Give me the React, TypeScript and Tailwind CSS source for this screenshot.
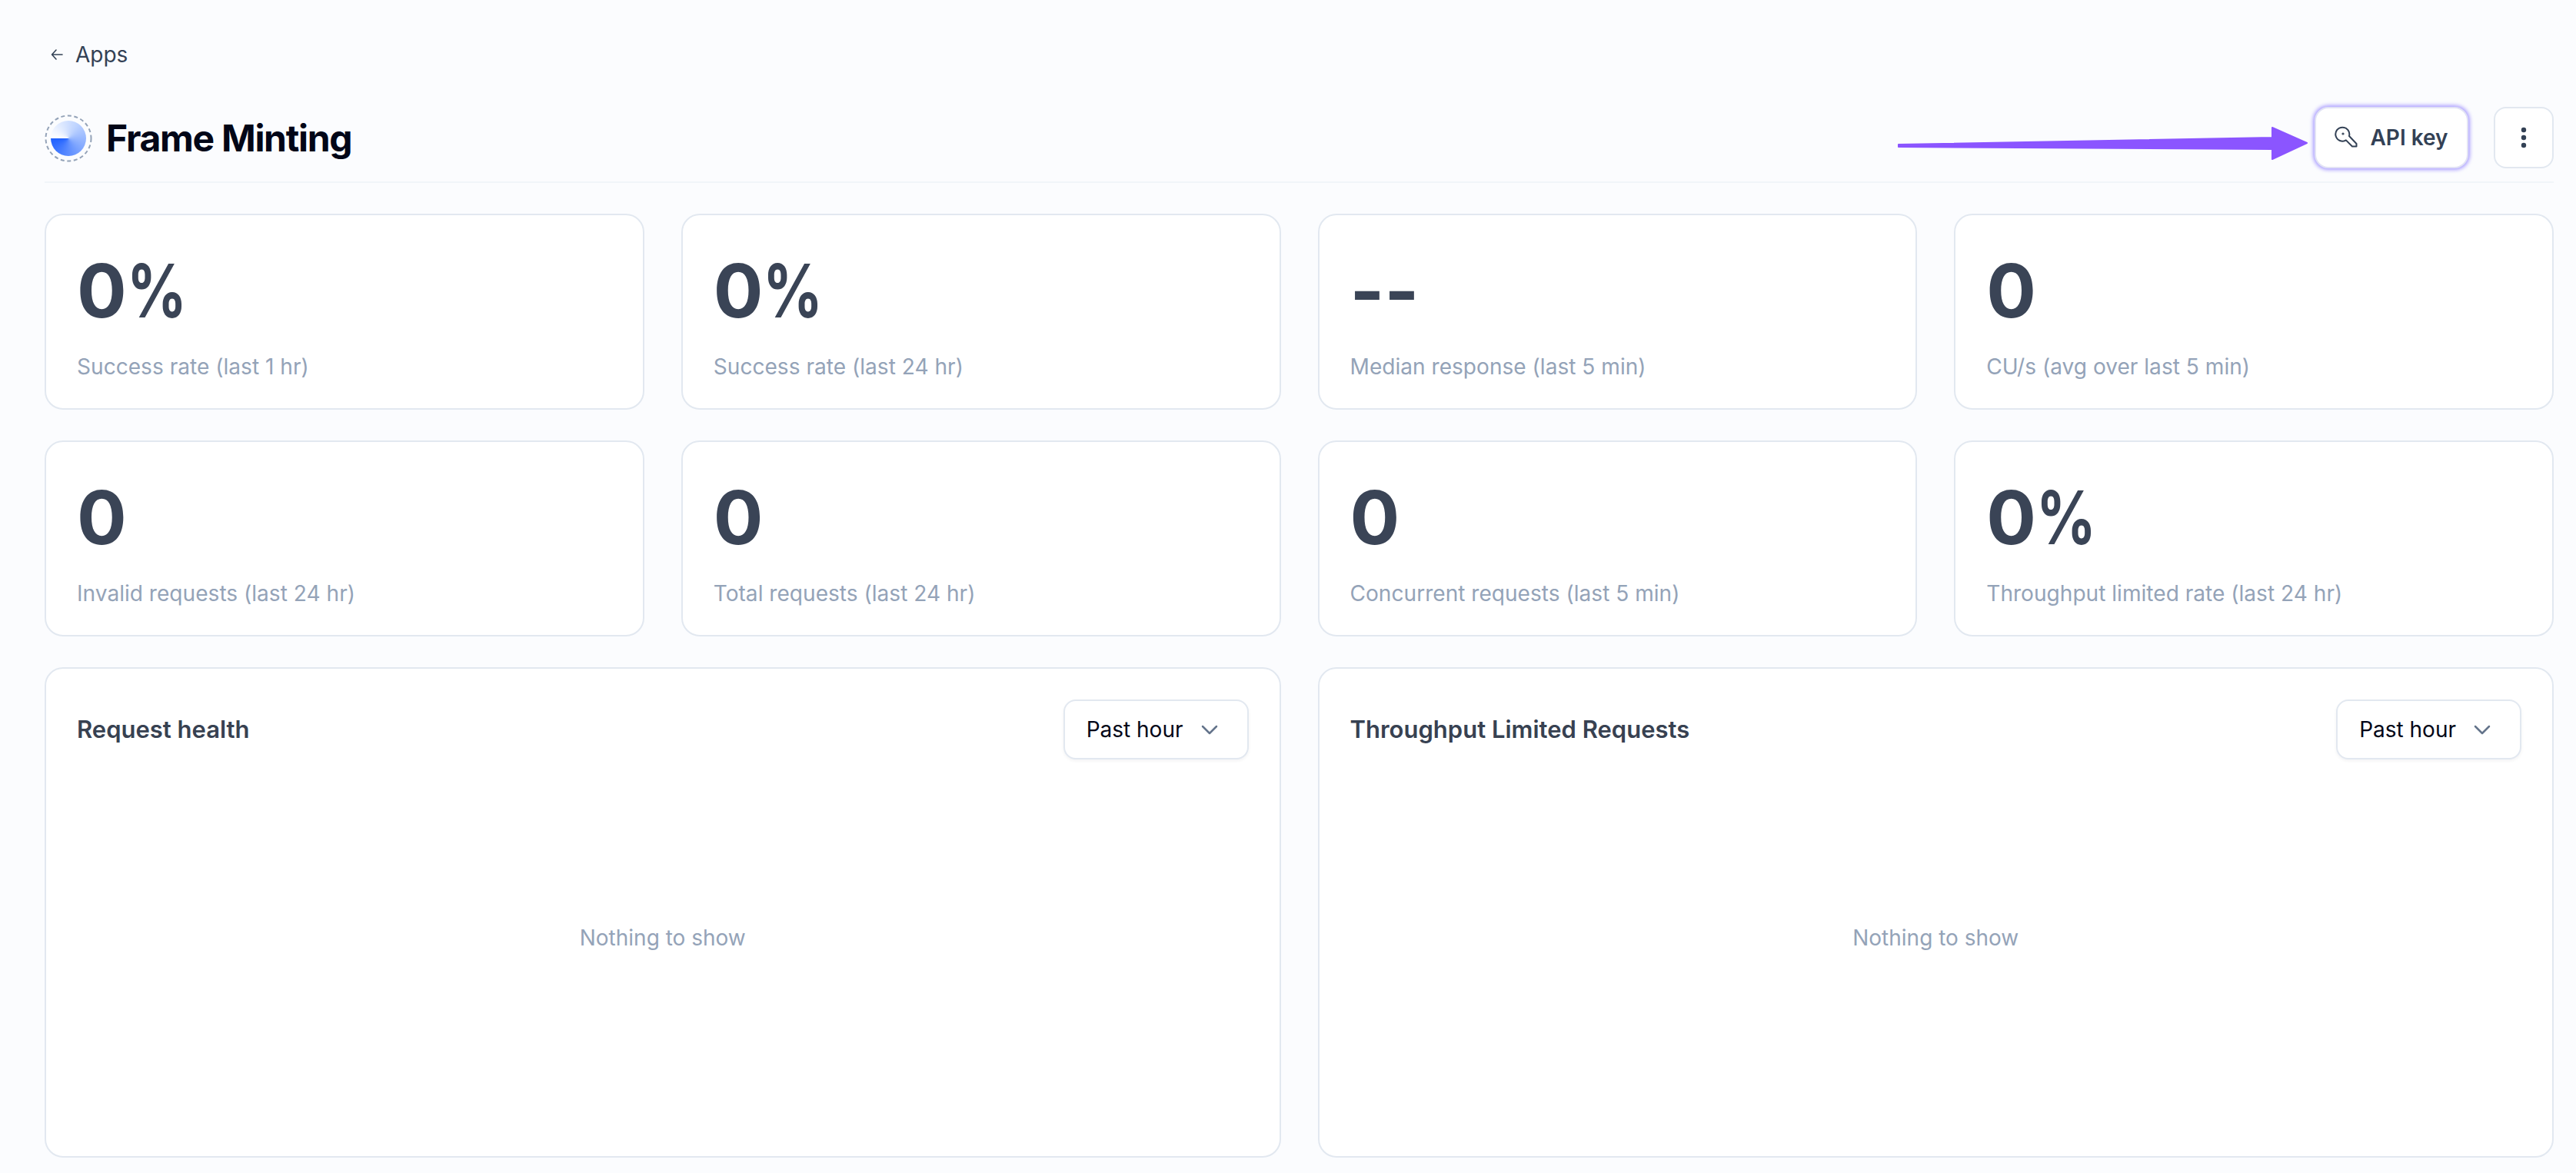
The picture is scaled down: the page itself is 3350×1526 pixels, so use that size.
import React from "react";

const metrics = [
  ["0", "%", "Success rate (last 1 hr)"],
  ["0", "%", "Success rate (last 24 hr)"],
  ["--", "", "Median response (last 5 min)"],
  ["0", "", "CU/s (avg over last 5 min)"],
  ["0", "", "Invalid requests (last 24 hr)"],
  ["0", "", "Total requests (last 24 hr)"],
  ["0", "", "Concurrent requests (last 5 min)"],
  ["0", "%", "Throughput limited rate (last 24 hr)"],
];

function Logo() {
  return (
    <div className="relative flex h-[62px] w-[62px] shrink-0 items-center justify-center">
      <svg className="absolute inset-0" width="62" height="62" viewBox="0 0 62 62" fill="none">
        <circle cx="31" cy="31" r="29.5" stroke="#94a3b8" strokeWidth="2" strokeDasharray="5 3.6" />
      </svg>
      <div className="h-[46px] w-[46px] rounded-full bg-[conic-gradient(from_270deg,#ffffff_0deg,#bfd4ff_120deg,#7fa6ff_220deg,#1f60ff_359deg)]" />
    </div>
  );
}

function KeyIcon() {
  return (
    <svg width="30" height="30" viewBox="0 0 30 30" fill="none" stroke="#334155" strokeWidth="2" strokeLinejoin="round" strokeLinecap="round">
      <path d="M19 13A9 9 0 1 0 14.9 18.4L23 26.5H28.5V23L19 13Z" />
      <circle cx="11" cy="10" r="0.6" fill="#334155" />
    </svg>
  );
}

function Chart({ title }: { title: string }) {
  return (
    <div className="flex h-[638px] flex-col rounded-[24px] border-2 border-[#e2e8f0] bg-white p-[40px]">
      <div className="flex items-center justify-between">
        <h2 className="text-[31px] font-semibold text-[#374151]">{title}</h2>
        <button className="flex h-[78px] items-center gap-[22px] rounded-[16px] border-2 border-[#e2e8f0] bg-white pl-[28px] pr-[37px] text-[28px] text-[#020617] shadow-[0_2px_4px_rgba(15,23,42,0.05)]">
          Past hour
          <svg width="24" height="24" viewBox="0 0 24 24" fill="none" stroke="#64748b" strokeWidth="2.5" strokeLinecap="round" strokeLinejoin="round">
            <path d="M3 8l9 9 9-9" />
          </svg>
        </button>
      </div>
      <div className="flex flex-1 items-center justify-center pb-[12px] text-[28px] text-[#94a3b8]">Nothing to show</div>
    </div>
  );
}

export default function App() {
  return (
    <div className="flex min-h-[1526px] flex-col bg-[#fbfcfe] pl-[58px] pr-[29px] font-['Inter',sans-serif]">
      <div className="flex items-center gap-[16px] pt-[52px] text-[28px] leading-[38px] text-[#334155]">
        <svg width="16" height="16" viewBox="0 0 16 16" fill="none" stroke="#334155" strokeWidth="1.6" strokeLinecap="round" strokeLinejoin="round" className="ml-[8px]">
          <path d="M15 8H1.5M7 2L1.5 8 7 14" />
        </svg>
        Apps
      </div>
      <div className="mt-[48px] flex h-[100px] items-start justify-between border-b-2 border-[#f1f5f9]">
        <div className="flex items-center gap-[18px] pt-[11px]">
          <Logo />
          <h1 className="text-[48px] font-bold leading-[62px] tracking-[-0.027em] text-[#020617]">Frame Minting</h1>
        </div>
        <div className="mt-[1px] flex items-center">
          <svg width="534" height="46" viewBox="0 0 534 46" className="mr-[9px] mt-[14px]">
            <path d="M2 25L488 16V3L533 23L488 44V31L2 28Z" fill="#8b55ff" stroke="#8b55ff" strokeWidth="2" strokeLinejoin="round" />
          </svg>
          <div className="flex items-center gap-[33px]">
            <button className="flex h-[80px] w-[200px] items-center justify-center gap-[16px] rounded-[18px] border-2 border-[#e2e3f5] bg-white text-[28px] font-semibold text-[#334155] shadow-[0_0_5px_2px_#a99cff]">
              <KeyIcon />
              API key
            </button>
            <button className="flex h-[80px] w-[78px] items-center justify-center rounded-[16px] border-2 border-[#e2e8f0] bg-white">
              <svg width="8" height="28" viewBox="0 0 8 28" fill="#334155">
                <circle cx="4" cy="4" r="3.2" />
                <circle cx="4" cy="14" r="3.2" />
                <circle cx="4" cy="24" r="3.2" />
              </svg>
            </button>
          </div>
        </div>
      </div>
      <div className="mt-[40px] grid grid-cols-4 gap-x-[48px] gap-y-[40px]">
        {metrics.map(([v, p, l]) => (
          <div key={l} className="h-[255px] rounded-[24px] border-2 border-[#e2e8f0] bg-white px-[40px] pt-[40px]">
            <div className="text-[96px] font-[650] leading-[116px] text-[#3a4456]">
              {v}
              {p && <span className="inline-block origin-left scale-x-[0.8]">{p}</span>}
            </div>
            <div className="mt-[21px] text-[28.1px] leading-[40px] text-[#94a3b8]">{l}</div>
          </div>
        ))}
      </div>
      <div className="mt-[40px] grid grid-cols-2 gap-x-[48px]">
        <Chart title="Request health" />
        <Chart title="Throughput Limited Requests" />
      </div>
    </div>
  );
}
